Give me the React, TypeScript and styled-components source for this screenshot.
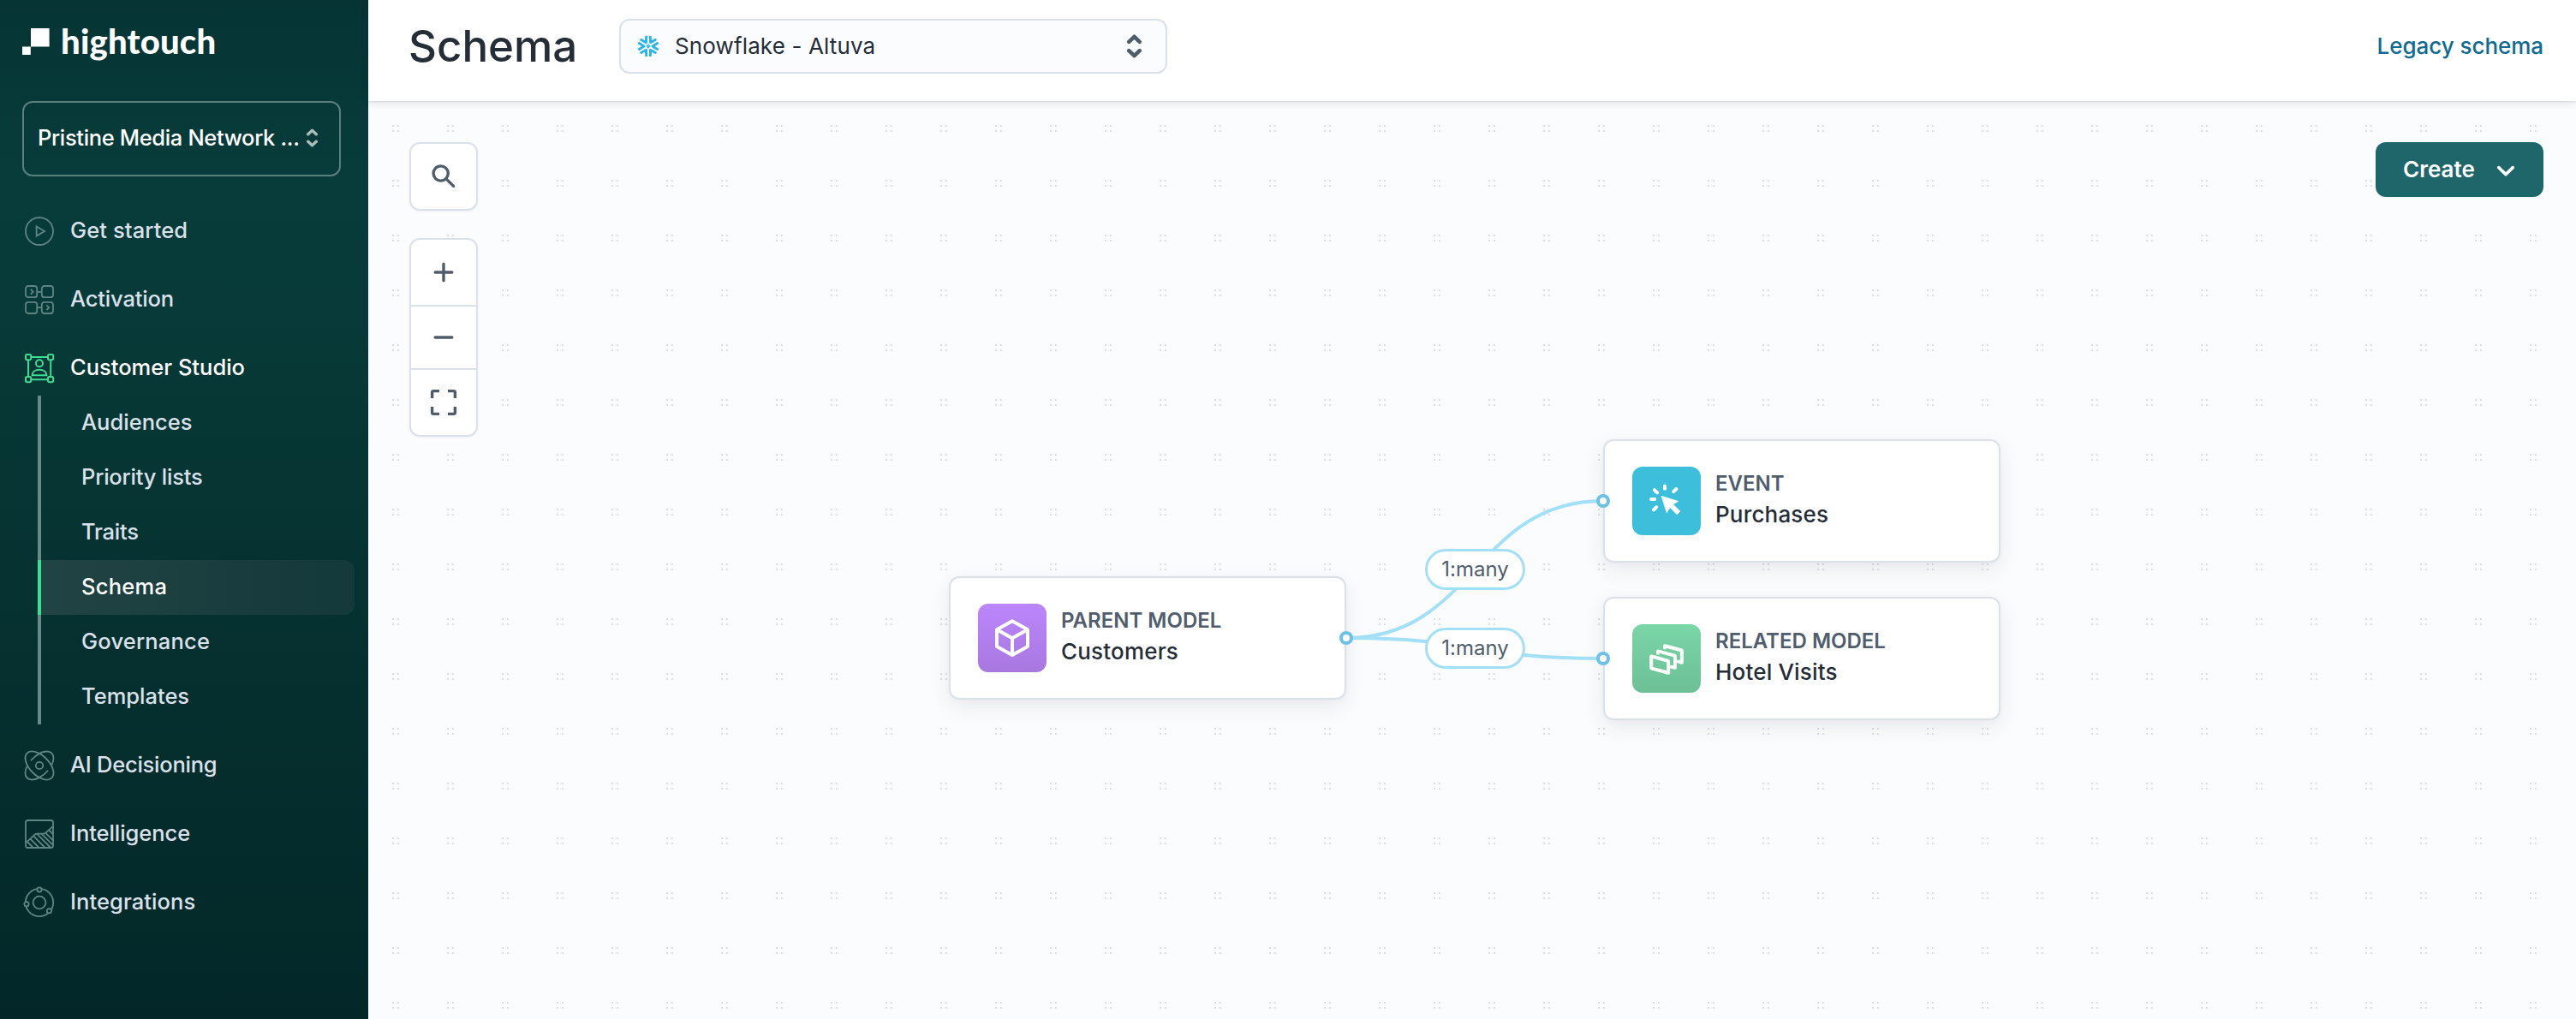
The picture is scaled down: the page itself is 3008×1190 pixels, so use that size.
import React from "react";
import styled, { createGlobalStyle, css } from "styled-components";

const GlobalStyle = createGlobalStyle`
  *, *::before, *::after { box-sizing: border-box; }
  html, body { margin: 0; padding: 0; }
  body {
    font-family: Inter, "Liberation Sans", sans-serif;
    background: #fbfcfe;
    overflow: hidden;
  }
  button { font: inherit; border: 0; padding: 0; background: none; color: inherit; }
`;

const Shell = styled.div`
  display: grid;
  grid-template-columns: 430px minmax(0, 1fr);
  height: 100vh;
`;

/* ---------- Sidebar ---------- */

const Sidebar = styled.aside`
  display: flex;
  flex-direction: column;
  padding: 33px 16px 0 26px;
  background: linear-gradient(
    180deg,
    #053433 0%,
    #073c3a 17%,
    #073a38 30%,
    #063533 47%,
    #052f2e 68%,
    #042b2b 85%,
    #032728 100%
  );
`;

const Logo = styled.div`
  display: flex;
  align-items: flex-start;
  height: 85px;
`;

const LogoMark = styled.svg`
  width: 32px;
  height: 31px;
  flex: none;
`;

const Wordmark = styled.span`
  margin: -9px 0 0 13px;
  font-family: Lato, "Open Sans", sans-serif;
  font-weight: 900;
  font-size: 40px;
  line-height: 48px;
  letter-spacing: 0.2px;
  color: #fff;
`;

const WorkspacePicker = styled.button`
  display: flex;
  align-items: center;
  gap: 9px;
  width: 372px;
  height: 88px;
  padding: 0 12px 2px 16px;
  border: 2px solid #5b7f7d;
  border-radius: 12px;
  color: #fff;
  text-align: left;
`;

const WorkspaceName = styled.span`
  width: 305px;
  font-size: 25.5px;
  font-weight: 500;
  letter-spacing: -0.35px;
  line-height: 36px;
  white-space: nowrap;
`;

const Nav = styled.nav`
  display: flex;
  flex-direction: column;
  gap: 16px;
  margin-top: 32px;
`;

const NavLink = styled.a<{ $active?: boolean; $tracking?: number }>`
  display: flex;
  align-items: center;
  gap: 18px;
  height: 64px;
  padding-left: 2px;
  font-size: 25.5px;
  font-weight: ${(p) => (p.$active ? 500 : 450)};
  letter-spacing: ${(p) => p.$tracking ?? 0}px;
  color: ${(p) => (p.$active ? "#ffffff" : "#dbe1ea")};
`;

const NavLabel = styled.span`
  padding-bottom: 4px;
`;

const NavIcon = styled.svg<{ $active?: boolean }>`
  width: 36px;
  height: 36px;
  flex: none;
  overflow: visible;
  fill: none;
  stroke: ${(p) => (p.$active ? "#3ddc91" : "#5f8583")};
  stroke-width: ${(p) => (p.$active ? 2 : 1.8)};
`;

const SubNav = styled.div`
  display: flex;
  flex-direction: column;
  margin: -16px 0 0 18px;
`;

const SubLink = styled.a<{ $active?: boolean; $tracking?: number }>`
  display: flex;
  align-items: center;
  height: 64px;
  padding: 0 0 4px 47px;
  border-left: 4px solid #668a89;
  font-size: 25.5px;
  font-weight: 450;
  letter-spacing: ${(p) => p.$tracking ?? 0}px;
  color: #dbe1ea;
  ${(p) =>
    p.$active &&
    css`
      border-left-color: #3ddc91;
      border-radius: 0 12px 12px 0;
      background: linear-gradient(90deg, #214344 0%, #14393a 100%);
      background-clip: padding-box;
      font-weight: 500;
      color: #fff;
    `}
`;

/* ---------- Header ---------- */

const Main = styled.main`
  display: flex;
  flex-direction: column;
  min-width: 0;
`;

const Header = styled.header`
  display: flex;
  align-items: center;
  height: 118px;
  padding: 0 38px 10px 47px;
  background: #fff;
  box-shadow: 0 0 2px rgba(30, 40, 55, 0.2), 0 2px 8px rgba(30, 40, 55, 0.14);
  z-index: 1;
`;

const Title = styled.h1`
  width: 246px;
  margin: 0;
  font-size: 51px;
  font-weight: 530;
  line-height: 62px;
  color: #252d37;
`;

const SourceSelect = styled.button`
  display: flex;
  align-items: center;
  width: 640px;
  height: 64px;
  padding: 0 28px 0 20px;
  border: 2px solid #dbe1e8;
  border-radius: 12px;
  background: #fbfcfe;
  color: #252d37;
`;

const SourceName = styled.span`
  flex: 1;
  padding-left: 19px;
  text-align: left;
  font-size: 26px;
  letter-spacing: 0.13px;
  line-height: 40px;
`;

const LegacyLink = styled.a`
  margin-left: auto;
  padding-bottom: 2px;
  font-size: 26px;
  font-weight: 500;
  letter-spacing: -0.05px;
  color: #106a92;
`;

/* ---------- Canvas ---------- */

const dot = "conic-gradient(from 90deg at 62px 62px, #dadce2 90deg, transparent 0)";

const Canvas = styled.section`
  position: relative;
  flex: 1;
  display: flex;
  justify-content: space-between;
  align-items: flex-start;
  padding: 48px 38px 0 48px;
  background-color: #fbfcfe;
  background-image: ${dot}, ${dot}, ${dot}, ${dot};
  background-size: 64px 64px;
  background-position: -34px -34px, -28px -34px, -34px -28px, -28px -28px;
`;

const ToolColumn = styled.div`
  display: flex;
  flex-direction: column;
  gap: 32px;
`;

const ToolGroup = styled.div`
  display: flex;
  flex-direction: column;
  width: 80px;
  border: 2px solid #dbe1e9;
  border-radius: 12px;
  background: #fff;
  box-shadow: 0 1px 3px rgba(30, 50, 80, 0.06);
`;

const ToolButton = styled.button<{ $height: number }>`
  display: flex;
  align-items: center;
  justify-content: center;
  height: ${(p) => p.$height}px;
  & + & {
    border-top: 2px solid #dbe1e9;
  }
`;

const ToolIcon = styled.svg`
  width: 36px;
  height: 36px;
  fill: none;
  stroke: #4f5d6b;
  stroke-width: 3.4;
`;

const CreateButton = styled.button`
  display: flex;
  align-items: center;
  justify-content: space-between;
  width: 196px;
  height: 64px;
  padding: 0 32px;
  border-radius: 12px;
  background: #1f666a;
  color: #fff;
  font-size: 26px;
  font-weight: 600;
`;

const CreateLabel = styled.span`
  padding-bottom: 1px;
`;

const EdgeLayer = styled.svg`
  position: absolute;
  left: 0;
  top: 0;
  width: 100%;
  height: 100%;
  pointer-events: none;
  fill: none;
  stroke: #a3e0f8;
  stroke-width: 4;
`;

const NodeCard = styled.article<{ $x: number; $y: number }>`
  position: absolute;
  left: ${(p) => p.$x}px;
  top: ${(p) => p.$y}px;
  display: flex;
  align-items: center;
  gap: 17px;
  width: 464px;
  height: 144px;
  padding: 0 32px;
  border: 2px solid #dbe1e9;
  border-radius: 12px;
  background: #fff;
  box-shadow: 0 8px 24px rgba(30, 42, 58, 0.09), 0 2px 8px rgba(30, 42, 58, 0.02);
`;

const NodeTile = styled.div<{ $from: string; $to: string }>`
  width: 80px;
  height: 80px;
  flex: none;
  border-radius: 12px;
  background: linear-gradient(180deg, ${(p) => p.$from}, ${(p) => p.$to});
`;

const TileIcon = styled.svg`
  display: block;
  width: 80px;
  height: 80px;
  fill: none;
  stroke: #fff;
  stroke-width: 4;
`;

const NodeText = styled.div`
  display: flex;
  flex-direction: column;
  padding-bottom: 4px;
`;

const NodeKind = styled.span`
  font-size: 24px;
  font-weight: 600;
  line-height: 36px;
  color: #4f5d6d;
`;

const NodeName = styled.span`
  font-size: 26px;
  font-weight: 480;
  letter-spacing: 0.18px;
  line-height: 36px;
  color: #252d37;
`;

const Handle = styled.i<{ $x: number; $y: number }>`
  position: absolute;
  left: ${(p) => p.$x - 8}px;
  top: ${(p) => p.$y - 8}px;
  width: 16px;
  height: 16px;
  border: 4px solid #6bc1e8;
  border-radius: 50%;
  background: #fff;
`;

const Cardinality = styled.span<{ $x: number; $y: number }>`
  position: absolute;
  left: ${(p) => p.$x}px;
  top: ${(p) => p.$y}px;
  display: flex;
  align-items: center;
  justify-content: center;
  width: 117px;
  height: 48px;
  padding-bottom: 1px;
  border: 3px solid #a3e0f8;
  border-radius: 24px;
  background: #fff;
  font-size: 24px;
  color: #4f5d6d;
`;

/* ---------- Icons ---------- */

const PlayIcon = () => (
  <NavIcon viewBox="0 0 36 36">
    <circle cx="18" cy="18" r="16" />
    <path d="M14.6 12.4 24 18l-9.4 5.6z" />
  </NavIcon>
);

const ActivationIcon = () => (
  <NavIcon viewBox="0 0 36 36">
    <rect x="2" y="2" width="13.2" height="13.2" rx="3" />
    <rect x="20.8" y="2" width="13.2" height="13.2" rx="3" />
    <rect x="2" y="20.8" width="13.2" height="13.2" rx="3" />
    <rect x="20.8" y="20.8" width="13.2" height="13.2" rx="3" />
    <path d="M15.2 8.8h5.6M15.2 27.2h5.6M7.8 6l2.8 2.8-2.8 2.8M26.4 24.4l2.8 2.8-2.8 2.8" />
  </NavIcon>
);

const StudioIcon = () => (
  <NavIcon viewBox="0 0 36 36" $active>
    {[
      [2, 2],
      [28, 2],
      [2, 28],
      [28, 28],
    ].map(([x, y]) => (
      <rect key={`${x}-${y}`} x={x} y={y} width="6.2" height="6.2" rx="1.6" />
    ))}
    <path d="M8.2 5H28M8.2 31.2H28M5 8.2V28M31.2 8.2V28" />
    <circle cx="18" cy="12.2" r="4" />
    <path d="M9.6 26.2c0-3.9 3.6-6.4 8.4-6.4s8.4 2.5 8.4 6.4z" />
  </NavIcon>
);

const AtomIcon = () => (
  <NavIcon viewBox="0 0 36 36">
    <circle cx="18" cy="18" r="4.2" />
    <g transform="translate(18 18)">
      <ellipse rx="20.4" ry="11.3" transform="rotate(45)" />
      <g transform="rotate(-45)">
        <path d="M-3.1 -11.2A20.4 11.3 0 0 1 9.7 9.9" />
        <path d="M3.1 11.2A20.4 11.3 0 0 1 -9.7 -9.9" />
      </g>
    </g>
  </NavIcon>
);

const ChartIcon = () => (
  <NavIcon viewBox="0 0 36 36">
    <rect x="2" y="2" width="32" height="32" rx="2.6" />
    <path d="M2.4 28.2 12.6 18.6q1-.9 2.4-.9h7.6q1.6 0 2.7-1L34 8.8" />
    <path d="M3.8 27 10.8 34M7.4 23.6 17.6 34M11 20.2 24.6 34M15 17.6 31.2 34M20.4 17.6 34 31.2M25.2 16.7 34 25.6M29 13.2l5 5.2" />
  </NavIcon>
);

const OrbitIcon = () => (
  <NavIcon viewBox="0 0 36 36">
    <circle cx="18" cy="18" r="16.2" />
    <circle cx="18" cy="18" r="7.4" />
    {[
      [18, 3],
      [3, 19.7],
      [29.4, 27.8],
    ].map(([x, y]) => (
      <circle key={x} cx={x} cy={y} r="2.6" fill="#042b2b" />
    ))}
  </NavIcon>
);

const Snowflake = () => (
  <svg width="24" height="24" viewBox="-12 -12 24 24" fill="none" stroke="#2ab5ea" strokeLinecap="round" strokeLinejoin="round">
    {[0, 60, 120, 180, 240, 300].map((a) => (
      <path key={a} transform={`rotate(${a})`} d="M10.6 -3.4 5 0l5.6 3.4" strokeWidth="2.9" />
    ))}
    <path d="M0-1.8 1.8 0 0 1.8-1.8 0z" strokeWidth="1.4" />
  </svg>
);

const UpDown = ({ w, h, color, stroke }: { w: number; h: number; color: string; stroke: number }) => {
  const inset = stroke / 2;
  const arm = w / 2 - inset;
  return (
    <svg width={w} height={h} fill="none" stroke={color} strokeWidth={stroke} strokeLinecap="round" strokeLinejoin="round">
      <path d={`M${inset} ${inset + arm + 0.3} ${w / 2} ${inset + 0.5} ${w - inset} ${inset + arm + 0.3}`} />
      <path d={`M${inset} ${h - inset - arm - 0.3} ${w / 2} ${h - inset - 0.5} ${w - inset} ${h - inset - arm - 0.3}`} />
    </svg>
  );
};

const CubeIcon = () => (
  <TileIcon viewBox="0 0 80 80" strokeLinejoin="round">
    <path d="M40 20.2 58 30.2v19.8L40 60 22 50V30.2zM22 30.2 40 40.2l18-10M40 40.2V60" />
  </TileIcon>
);

const ClickIcon = () => (
  <TileIcon viewBox="0 0 80 80" strokeLinecap="round">
    <path d="M38 22.6v3.2M51.4 26l-3.2 3.2M25.9 27.2l3.3 3.2M22 38h4.2M28.2 47.2l-3.3 3.2" />
    <path
      d="M34.4 34.4 53.6 40.4 47.6 44 56 52.2 52.3 55.8 44 47.6 40.4 53.4z"
      fill="#fff"
      strokeWidth="0.8"
      strokeLinejoin="round"
    />
  </TileIcon>
);

const CardsIcon = () => (
  <TileIcon viewBox="0 0 80 80" strokeLinejoin="round" strokeLinecap="round">
    <path d="M22.4 37.4 41.6 42.8q.6.2.6.8v13.2L22.8 51.6q-.6-.2-.6-.8V37.6z" />
    <path d="M30 33.8v-2.4L49.4 36.6q.6.2.6.8v13.4l-4.2-1.1" />
    <path d="M38 27.6v-2.4L57.2 30.2q.7.2.7.8v13.7l-4-1.1" />
  </TileIcon>
);

/* ---------- Data ---------- */

const subItems = [
  { label: "Audiences", tracking: 0.02 },
  { label: "Priority lists", tracking: -0.2 },
  { label: "Traits", tracking: -0.2 },
  { label: "Schema", tracking: 0.27, active: true },
  { label: "Governance", tracking: 0.2 },
  { label: "Templates", tracking: 0 },
];

const nodes = [
  { kind: "PARENT MODEL", name: "Customers", x: 678, y: 555, from: "#bb86fc", to: "#a878e0", icon: <CubeIcon /> },
  { kind: "EVENT", name: "Purchases", x: 1442, y: 395, from: "#3dbfdb", to: "#3dbfdb", icon: <ClickIcon /> },
  { kind: "RELATED MODEL", name: "Hotel Visits", x: 1442, y: 579, from: "#7ad6a7", to: "#6dbf96", icon: <CardsIcon /> },
];

const edges = ["M1142 627C1292 627 1292 467 1442 467", "M1142 627C1292 627 1292 651 1442 651"];

export default function App() {
  return (
    <>
      <GlobalStyle />
      <Shell>
        <Sidebar>
          <Logo>
            <LogoMark viewBox="0 0 32 31" fill="#fff">
              <path d="M10 0h21.6v21.4H10zM0 21.4h9.8V31H0z" />
            </LogoMark>
            <Wordmark>hightouch</Wordmark>
          </Logo>
          <WorkspacePicker>
            <WorkspaceName>Pristine Media Network ...</WorkspaceName>
            <UpDown w={13} h={22} color="#a9bdbb" stroke={3.4} />
          </WorkspacePicker>
          <Nav>
            <NavLink $tracking={0.1}>
              <PlayIcon />
              <NavLabel>Get started</NavLabel>
            </NavLink>
            <NavLink $tracking={-0.15}>
              <ActivationIcon />
              <NavLabel>Activation</NavLabel>
            </NavLink>
            <NavLink $active>
              <StudioIcon />
              <NavLabel>Customer Studio</NavLabel>
            </NavLink>
            <SubNav>
              {subItems.map((s) => (
                <SubLink key={s.label} $active={s.active} $tracking={s.tracking}>
                  {s.label}
                </SubLink>
              ))}
            </SubNav>
            <NavLink $tracking={-0.25}>
              <AtomIcon />
              <NavLabel>AI Decisioning</NavLabel>
            </NavLink>
            <NavLink $tracking={-0.05}>
              <ChartIcon />
              <NavLabel>Intelligence</NavLabel>
            </NavLink>
            <NavLink $tracking={0.08}>
              <OrbitIcon />
              <NavLabel>Integrations</NavLabel>
            </NavLink>
          </Nav>
        </Sidebar>
        <Main>
          <Header>
            <Title>Schema</Title>
            <SourceSelect>
              <Snowflake />
              <SourceName>Snowflake - Altuva</SourceName>
              <UpDown w={17} h={28} color="#4f5d6b" stroke={4.6} />
            </SourceSelect>
            <LegacyLink>Legacy schema</LegacyLink>
          </Header>
          <Canvas>
            <ToolColumn>
              <ToolGroup>
                <ToolButton $height={76} aria-label="Search">
                  <ToolIcon viewBox="0 0 36 36" strokeLinecap="round">
                    <circle cx="14.7" cy="14.5" r="8.6" />
                    <path d="M20.8 20.6 29.6 29.4" />
                  </ToolIcon>
                </ToolButton>
              </ToolGroup>
              <ToolGroup>
                <ToolButton $height={76} aria-label="Zoom in">
                  <ToolIcon viewBox="0 0 36 36" strokeLinecap="round">
                    <path d="M18 8.2v19.6M8.2 18h19.6" />
                  </ToolIcon>
                </ToolButton>
                <ToolButton $height={74} aria-label="Zoom out">
                  <ToolIcon viewBox="0 0 36 36" strokeLinecap="round">
                    <path d="M8.2 18h19.6" />
                  </ToolIcon>
                </ToolButton>
                <ToolButton $height={78} aria-label="Fit view">
                  <ToolIcon viewBox="0 0 36 36">
                    <path d="M4.6 13V6.2q0-1.6 1.6-1.6H13M23 4.6h6.8q1.6 0 1.6 1.6V13M31.4 23v6.8q0 1.6-1.6 1.6H23M13 31.4H6.2q-1.6 0-1.6-1.6V23" />
                  </ToolIcon>
                </ToolButton>
              </ToolGroup>
            </ToolColumn>
            <CreateButton>
              <CreateLabel>Create</CreateLabel>
              <svg width="24" height="16" fill="none" stroke="#fff" strokeWidth="3.6" strokeLinecap="round" strokeLinejoin="round">
                <path d="M3.8 5.6 12 13.6l8.2-8" />
              </svg>
            </CreateButton>
            {nodes.map((n) => (
              <NodeCard key={n.kind} $x={n.x} $y={n.y}>
                <NodeTile $from={n.from} $to={n.to}>
                  {n.icon}
                </NodeTile>
                <NodeText>
                  <NodeKind>{n.kind}</NodeKind>
                  <NodeName>{n.name}</NodeName>
                </NodeText>
              </NodeCard>
            ))}
            <EdgeLayer>
              {edges.map((d) => (
                <path key={d} d={d} />
              ))}
            </EdgeLayer>
            <Handle $x={1142} $y={627} />
            <Handle $x={1442} $y={467} />
            <Handle $x={1442} $y={651} />
            <Cardinality $x={1234} $y={523}>1:many</Cardinality>
            <Cardinality $x={1234} $y={615}>1:many</Cardinality>
          </Canvas>
        </Main>
      </Shell>
    </>
  );
}
